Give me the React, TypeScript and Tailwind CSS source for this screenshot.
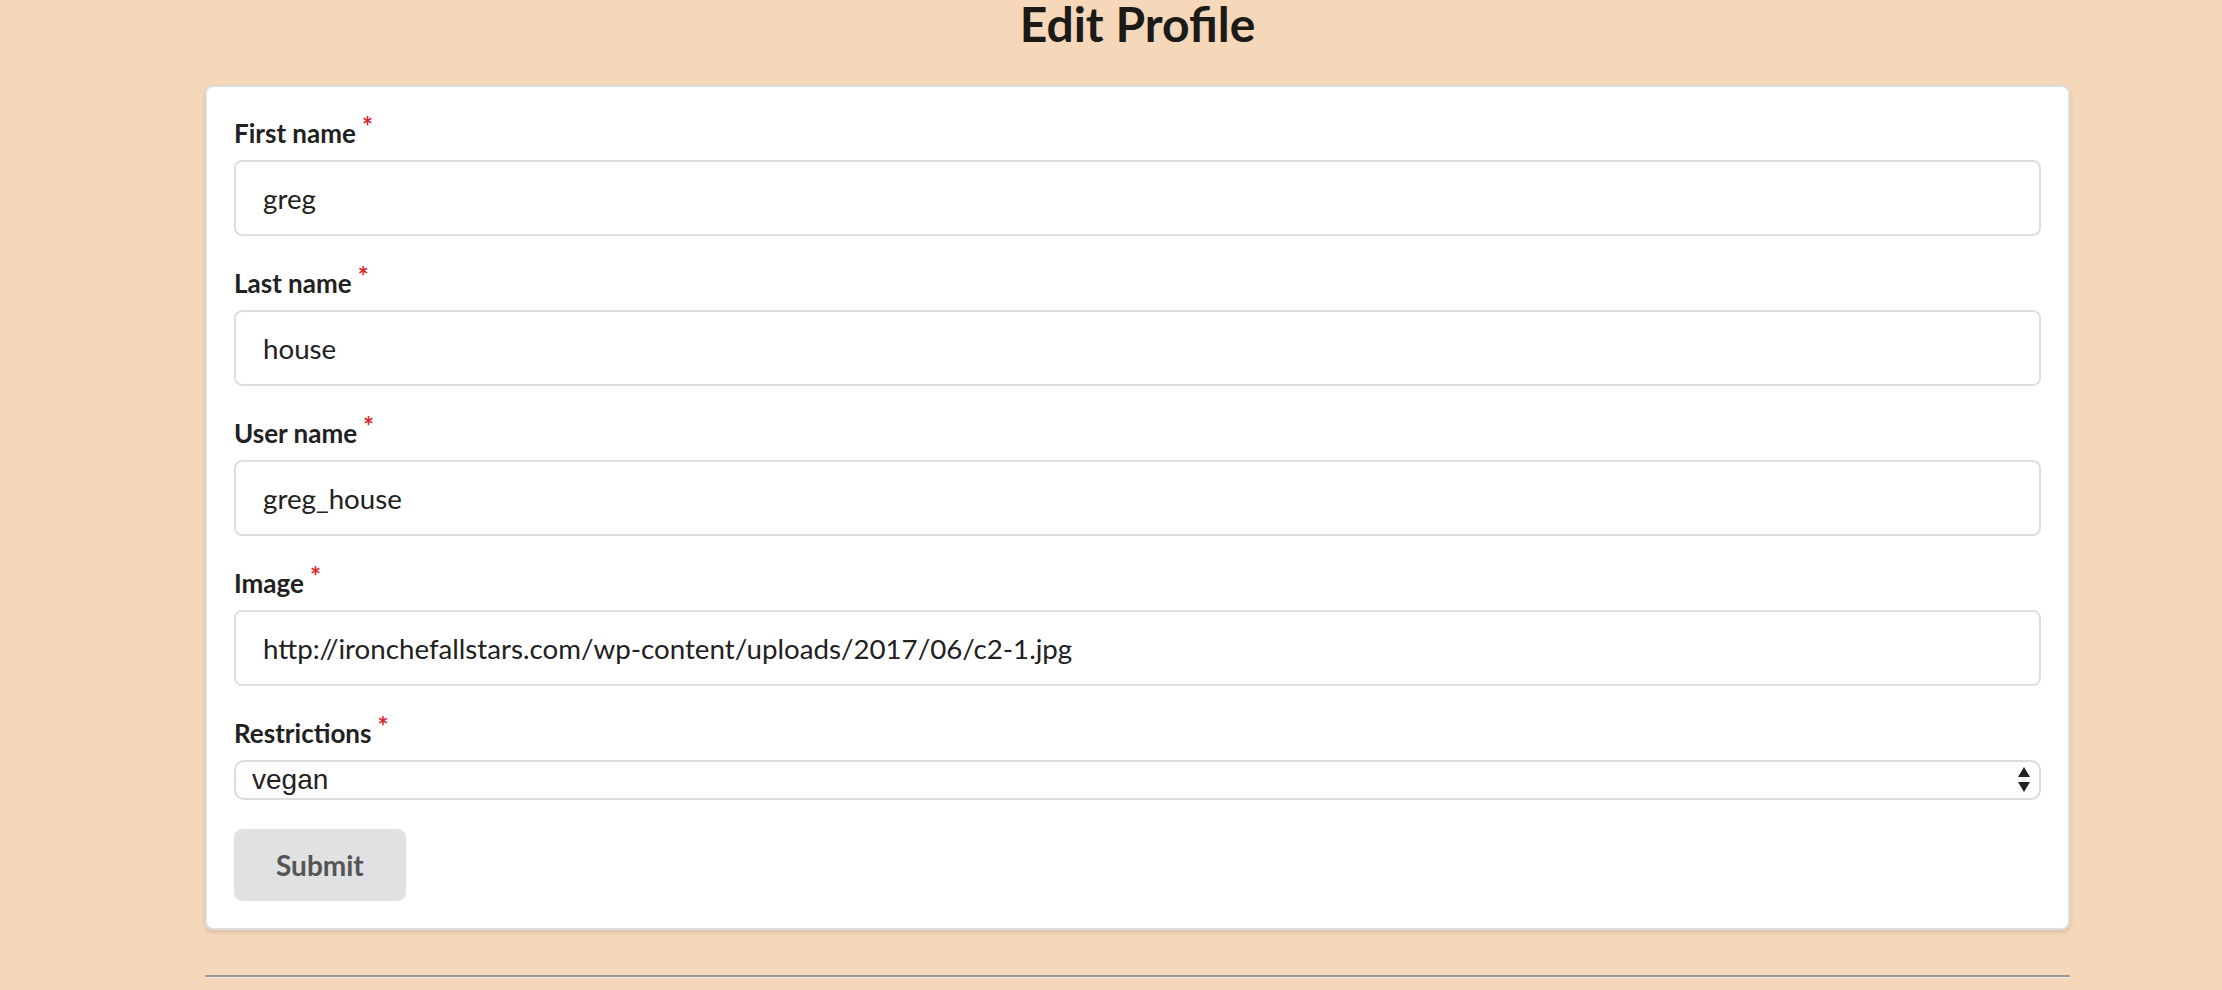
import React from "react";

const fields = [
  { label: "First name", value: "greg" },
  { label: "Last name", value: "house" },
  { label: "User name", value: "greg_house" },
  { label: "Image", value: "http://ironchefallstars.com/wp-content/uploads/2017/06/c2-1.jpg" },
];

function Label({ text }: { text: string }) {
  return (
    <label className="block text-[26px] leading-[38px] mb-[8px] font-bold text-[#212121]">
      {text}
      <span className="relative top-[-7px] ml-[6px] text-[#db2828]">*</span>
    </label>
  );
}

export default function App() {
  return (
    <div
      className="min-h-screen w-full bg-[#f5d7ba]"
      style={{ fontFamily: "Lato, 'Noto Sans', sans-serif" }}
    >
      <div className="ml-[205px] w-[1865px] pb-[10px]">
        <h1 className="text-center text-[48px] leading-[48px] font-bold text-[#1c1a17] mb-[37px]">
          Edit Profile
        </h1>
        <div className="bg-white rounded-[8px] border-2 border-[rgba(34,36,38,0.15)] shadow-[0_2px_4px_0_rgba(34,36,38,0.15)] px-[27px] pt-[27px] pb-[27px]">
          {fields.map((f) => (
            <div key={f.label} className="mb-[28px]">
              <Label text={f.label} />
              <input
                defaultValue={f.value}
                className="block w-full h-[76px] rounded-[8px] border-2 border-[#dedede] px-[27px] text-[27.7px] text-[#212121] outline-none bg-white"
                style={{ fontFamily: "Lato, 'Noto Sans', sans-serif" }}
              />
            </div>
          ))}
          <div className="mb-[29px]">
            <Label text="Restrictions" />
            <div className="relative">
              <select
                defaultValue="vegan"
                className="block w-full h-[40px] appearance-none rounded-[10px] border-2 border-[#dcdcdc] bg-white pl-[16px] text-[28px] leading-[36px] text-[#222] outline-none"
                style={{ fontFamily: "'Liberation Sans', Arial, sans-serif" }}
              >
                <option value="vegan">vegan</option>
                <option value="vegetarian">vegetarian</option>
                <option value="none">none</option>
              </select>
              <svg
                className="pointer-events-none absolute right-[10px] top-[7px]"
                width="14"
                height="26"
                viewBox="0 0 14 26"
              >
                <polygon points="7,0 13,10 1,10" fill="#222" />
                <polygon points="1,15 13,15 7,25" fill="#222" />
              </svg>
            </div>
          </div>
          <button className="h-[72px] px-[42px] rounded-[8px] bg-[#e0e1e2] text-[28px] leading-[28px] font-bold text-[#555555]">
            Submit
          </button>
        </div>
        <div className="mt-[45px]">
          <div className="h-[2px] bg-[#9a9a9a]" />
          <div className="h-[1px] bg-[#ececec]" />
        </div>
      </div>
    </div>
  );
}
